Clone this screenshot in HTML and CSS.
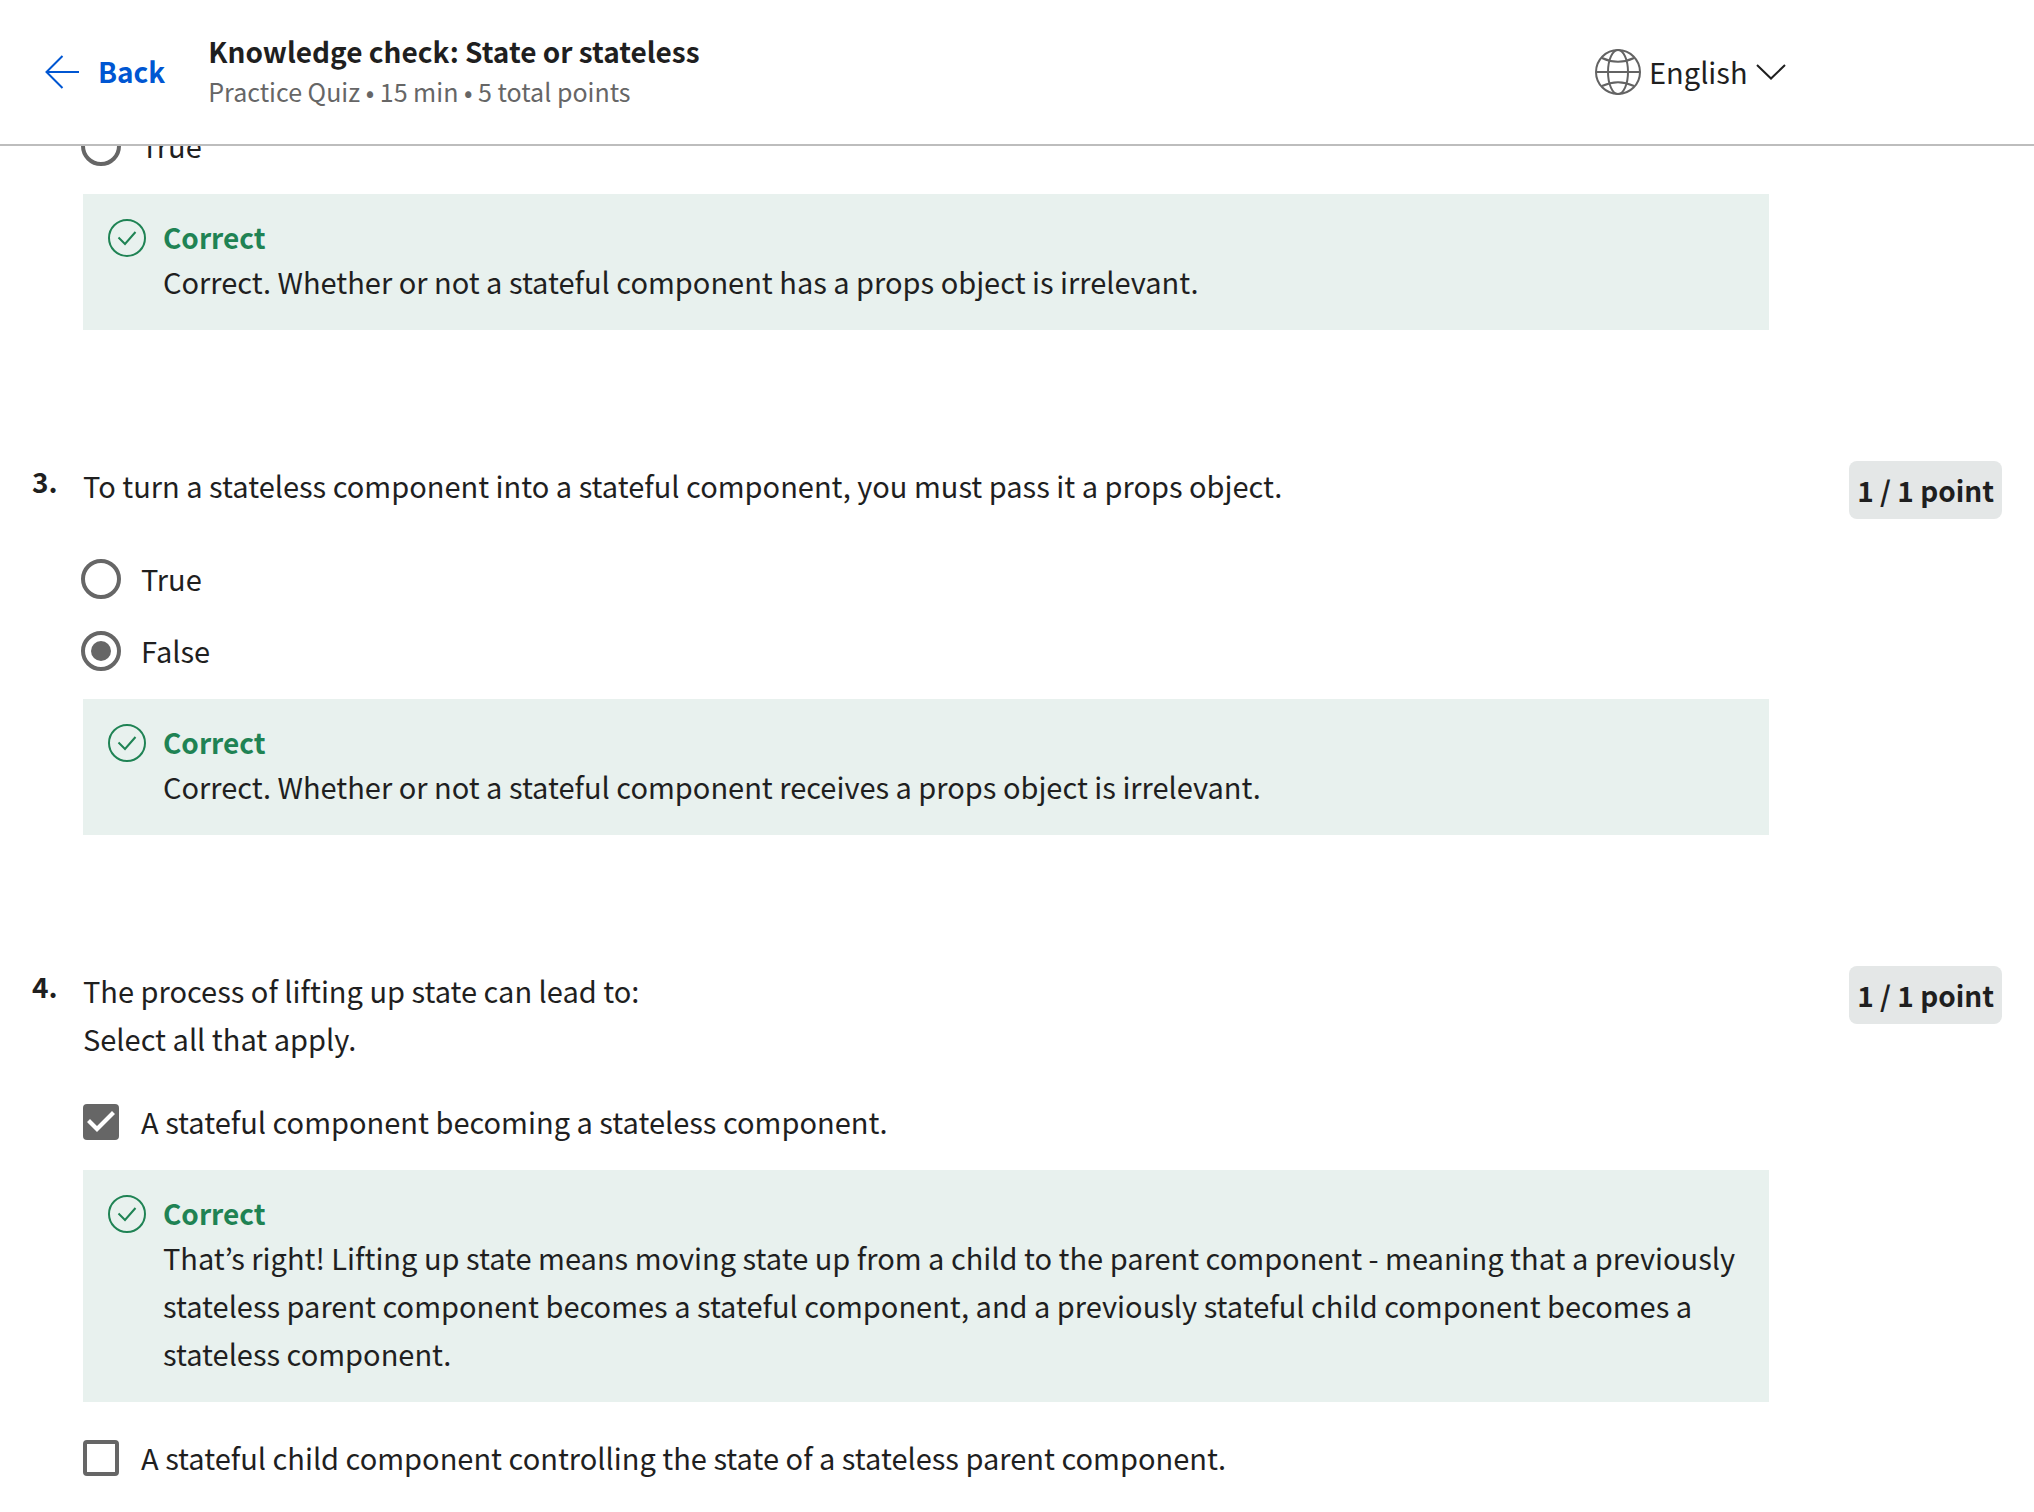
FILE: index.html
```html
<!DOCTYPE html>
<html lang="en">
<head>
<meta charset="utf-8">
<meta name="viewport" content="width=device-width, initial-scale=1">
<title>Knowledge check: State or stateless</title>
<link rel="stylesheet" href="styles.css">
</head>
<body>
<svg class="sprite" aria-hidden="true">
  <symbol id="icon-correct" viewBox="0 0 38 38">
    <circle cx="19" cy="19" r="18" fill="none" stroke="currentColor" stroke-width="2"/>
    <path d="M10.500 18.500 L17 25 L27.500 13" fill="none" stroke="currentColor" stroke-width="2"/>
  </symbol>
</svg>

<header class="topbar">
  <button class="back" type="button">
    <svg class="back-icon" viewBox="0 0 34 34" aria-hidden="true"><path d="M17.500 1 L1.500 17 L17.500 33 M1.500 17 H34" fill="none" stroke="currentColor" stroke-width="2"/></svg>
    <span>Back</span>
  </button>
  <div class="heading">
    <h1 class="title">Knowledge check: State or stateless</h1>
    <p class="meta">Practice Quiz • 15 min • 5 total points</p>
  </div>
  <div class="language">
    <svg class="globe" viewBox="0 0 46 46" aria-hidden="true" fill="none" stroke="currentColor" stroke-width="2">
      <circle cx="23" cy="23" r="22"/>
      <ellipse cx="23" cy="23" rx="10" ry="22"/>
      <path d="M1 23 H45 M7 9 Q23 16.500 39 9 M7 37 Q23 29.500 39 37"/>
    </svg>
    <select class="language-select" aria-label="Language"><option>English</option></select>
    <svg class="chevron" viewBox="0 0 30 16" aria-hidden="true"><path d="M1 1 L15 14.500 L29 1" fill="none" stroke="currentColor" stroke-width="2"/></svg>
  </div>
</header>

<main class="quiz">
  <section class="question">
    <div class="content">
      <label class="option"><input class="radio" type="radio" name="q2"><span>True</span></label>
      <div class="feedback">
        <svg class="feedback-icon" aria-hidden="true"><use href="#icon-correct"/></svg>
        <div>
          <h2 class="verdict">Correct</h2>
          <p class="text">Correct. Whether or not a stateful component has a props object is irrelevant.</p>
        </div>
      </div>
    </div>
  </section>

  <section class="question">
    <div class="number">3.</div>
    <div class="content">
      <p class="text prompt-single">To turn a stateless component into a stateful component, you must pass it a props object.</p>
      <label class="option"><input class="radio" type="radio" name="q3"><span>True</span></label>
      <label class="option"><input class="radio" type="radio" name="q3" checked><span>False</span></label>
      <div class="feedback">
        <svg class="feedback-icon" aria-hidden="true"><use href="#icon-correct"/></svg>
        <div>
          <h2 class="verdict">Correct</h2>
          <p class="text">Correct. Whether or not a stateful component receives a props object is irrelevant.</p>
        </div>
      </div>
    </div>
    <div class="points">1 / 1 point</div>
  </section>

  <section class="question">
    <div class="number">4.</div>
    <div class="content">
      <div class="prompt">
        <p class="text">The process of lifting up state can lead to:</p>
        <p class="text">Select all that apply.</p>
      </div>
      <label class="option"><input class="checkbox" type="checkbox" checked><span>A stateful component becoming a stateless component.</span></label>
      <div class="feedback">
        <svg class="feedback-icon" aria-hidden="true"><use href="#icon-correct"/></svg>
        <div>
          <h2 class="verdict">Correct</h2>
          <p class="text">That’s right! Lifting up state means moving state up from a child to the parent component - meaning that a previously stateless parent component becomes a stateful component, and a previously stateful child component becomes a stateless component.</p>
        </div>
      </div>
      <label class="option"><input class="checkbox" type="checkbox"><span>A stateful child component controlling the state of a stateless parent component.</span></label>
    </div>
    <div class="points">1 / 1 point</div>
  </section>
</main>
</body>
</html>
```
FILE: styles.css
```css
* {
  box-sizing: border-box;
  margin: 0;
}

body {
  font-family: "Noto Sans CJK KR", sans-serif;
  font-size: 29px;
  line-height: 48px;
  color: #1f1f1f;
  background: #fff;
}

.sprite {
  position: absolute;
  width: 0;
  height: 0;
}

.topbar {
  position: sticky;
  top: 0;
  z-index: 1;
  display: flex;
  align-items: center;
  height: 146px;
  padding: 0 248px 0 45px;
  background: #fff;
  border-bottom: 2px solid #bdbdbd;
}

.back {
  display: flex;
  align-items: center;
  gap: 19px;
  padding: 0;
  border: 0;
  background: none;
  font: inherit;
  font-size: 28px;
  font-weight: 600;
  line-height: 46px;
  color: #0056d2;
}

.back span,
.language-select {
  padding-bottom: 2px;
}

.back-icon {
  width: 34px;
  height: 34px;
}

.heading {
  margin-left: 43px;
  padding-bottom: 2px;
}

.title {
  font-size: 28px;
  font-weight: 600;
  line-height: 40px;
}

.meta {
  font-size: 25px;
  line-height: 40px;
  color: #666;
}

.language {
  display: flex;
  align-items: center;
  gap: 8px;
  margin-left: auto;
}

.globe {
  width: 46px;
  height: 46px;
  color: #636363;
}

.language-select {
  appearance: none;
  padding: 0 0 2px;
  border: 0;
  background: none;
  font: inherit;
  color: inherit;
}

.chevron {
  width: 30px;
  height: 16px;
}

.quiz {
  margin-top: -20px;
  padding: 0 32px 32px;
}

.question {
  display: grid;
  grid-template-columns: 51px minmax(0, 1fr) 233px;
  align-items: start;
}

.question + .question {
  margin-top: 131px;
}

.number {
  font-size: 28px;
  font-weight: 600;
  line-height: 40px;
}

.content {
  grid-column: 2;
}

.prompt {
  margin-bottom: 40px;
}

.prompt-single {
  margin-bottom: 50px;
}

.option {
  display: flex;
  align-items: center;
  gap: 22px;
  height: 40px;
}

.option span {
  padding-bottom: 2px;
}

.option + .option {
  margin-top: 32px;
}

.radio,
.checkbox {
  flex: none;
  display: grid;
  place-items: center;
  appearance: none;
  border: 4px solid #666;
  background: #fff;
}

.radio {
  width: 40px;
  height: 40px;
  margin: 0 -2px;
  border-radius: 50%;
}

.radio:checked::before {
  content: "";
  width: 20px;
  height: 20px;
  border-radius: 50%;
  background: #666;
}

.checkbox {
  width: 36px;
  height: 36px;
  border-radius: 4px;
}

.checkbox:checked {
  border: 0;
  background: #666;
}

.checkbox:checked::before {
  content: "";
  width: 36px;
  height: 36px;
  background: #fff;
  clip-path: polygon(4px 18px, 7px 15px, 14px 22px, 29px 7px, 32px 10px, 14px 28px);
}

.feedback {
  display: flex;
  gap: 17px;
  margin-top: 28px;
  padding: 23px 32px 25px 25px;
  background: #e8f1ee;
}

.feedback + .option {
  margin-top: 36px;
}

.feedback-icon {
  flex: none;
  width: 38px;
  height: 38px;
  margin-top: 2px;
  color: #1f8354;
}

.verdict {
  font-size: 28px;
  font-weight: 600;
  line-height: 40px;
  color: #1f8354;
}

.points {
  justify-self: end;
  padding: 8px;
  border-radius: 8px;
  background: #e4e7e7;
  font-size: 28px;
  font-weight: 600;
  line-height: 42px;
}
```
